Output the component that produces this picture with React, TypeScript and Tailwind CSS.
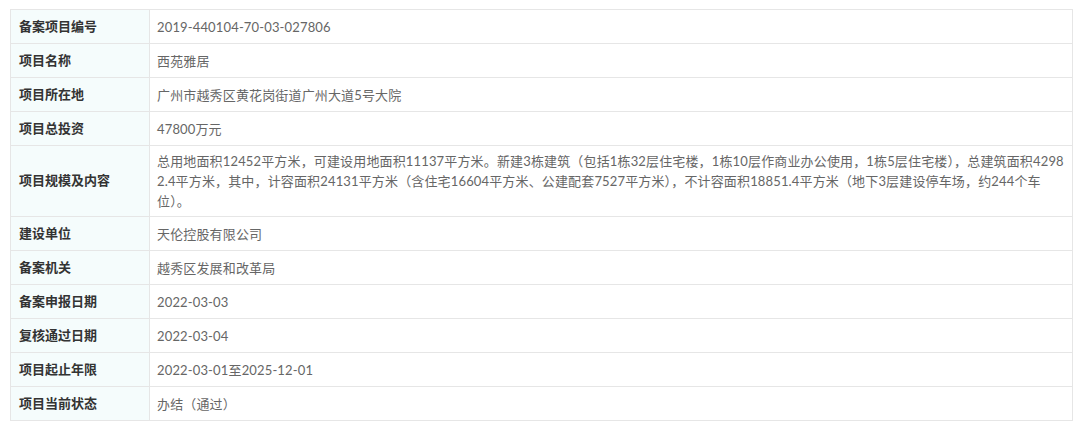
const rows: [string, React.ReactNode][] = [
  ["备案项目编号", "2019-440104-70-03-027806"],
  ["项目名称", "西苑雅居"],
  ["项目所在地", "广州市越秀区黄花岗街道广州大道5号大院"],
  ["项目总投资", "47800万元"],
  [
    "项目规模及内容",
    <>
      总用地面积12452平方米，可建设用地面积11137平方米。新建3栋建筑（包括1栋32层住宅楼，1栋10层作商业办公使用，1栋5层住宅楼），总建筑面积4298
      <br />
      2.4平方米，其中，计容面积24131平方米（含住宅16604平方米、公建配套7527平方米），不计容面积18851.4平方米（地下3层建设停车场，约244个车
      <br />
      位）。
    </>,
  ],
  ["建设单位", "天伦控股有限公司"],
  ["备案机关", "越秀区发展和改革局"],
  ["备案申报日期", "2022-03-03"],
  ["复核通过日期", "2022-03-04"],
  ["项目起止年限", "2022-03-01至2025-12-01"],
  ["项目当前状态", "办结（通过）"],
];

export default function App() {
  return (
    <div
      className="bg-white w-[1080px] h-[431px] pt-[9px] pl-[10px]"
      style={{ fontFamily: 'Lato, "Noto Sans CJK SC", sans-serif' }}
    >
      <table className="w-[1063px] border-collapse text-[13px] table-fixed">
        <colgroup>
          <col className="w-[139px]" />
          <col />
        </colgroup>
        <tbody>
          {rows.map(([k, v]) => (
            <tr key={k}>
              <td className="h-[34px] border border-[#e6e6e6] bg-[#f5fcfc] pl-[8px] font-bold text-[#333]">{k}</td>
              <td className="h-[34px] border border-[#e6e6e6] px-[7px] py-[5px] leading-[20px] tracking-[0.15px] text-[#666] break-all">{v}</td>
            </tr>
          ))}
        </tbody>
      </table>
    </div>
  );
}
